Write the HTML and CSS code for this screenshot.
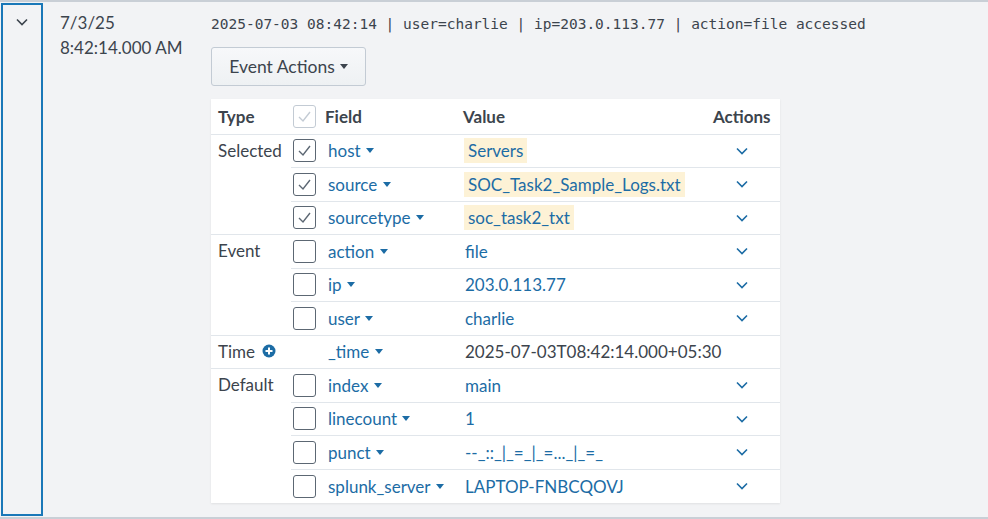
FILE: index.html
```html
<!DOCTYPE html>
<html>
<head>
<meta charset="utf-8">
<link rel="stylesheet" href="styles.css">
</head>
<body>
<div class="event">
  <div class="expand">
    <svg class="exp-chev" width="12" height="8" viewBox="0 0 12 8"><path d="M1 1.5 L6 6.5 L11 1.5" fill="none" stroke="#3c444d" stroke-width="1.6"/></svg>
  </div>
  <div class="time">
    <div>7/3/25</div>
    <div>8:42:14.000 AM</div>
  </div>
  <div class="body">
    <div class="raw">2025-07-03 08:42:14 | user=charlie | ip=203.0.113.77 | action=file accessed</div>
    <button class="btn"><span>Event Actions</span><span class="caret dark"></span></button>
    <table class="fields">
      <colgroup>
        <col class="w-type"><col class="w-chk"><col class="w-field"><col class="w-val"><col class="w-act">
      </colgroup>
      <thead>
        <tr>
          <th class="c-type">Type</th>
          <th class="c-chk"><span class="cb hdr"><svg viewBox="0 0 23 23"><path d="M6 12 L10 16 L17 7" fill="none" stroke="#c3cbd4" stroke-width="1.4"/></svg></span></th>
          <th class="c-field">Field</th>
          <th class="c-val">Value</th>
          <th class="c-act">Actions</th>
        </tr>
      </thead>
      <tbody>
        <tr class="grp">
          <td class="c-type" rowspan="3">Selected</td>
          <td class="c-chk"><span class="cb"><svg viewBox="0 0 23 23"><path d="M6 12 L10 16 L17 7" fill="none" stroke="#5c6773" stroke-width="1.4"/></svg></span></td>
          <td class="c-field">host <span class="caret"></span></td>
          <td class="c-val"><span class="hl">Servers</span></td>
          <td class="c-act"><svg class="chev" width="12" height="8" viewBox="0 0 12 8"><path d="M1 1.5 L6 6.5 L11 1.5" fill="none" stroke="#1c6ca5" stroke-width="1.6"/></svg></td>
        </tr>
        <tr class="sub">
          <td class="c-chk"><span class="cb"><svg viewBox="0 0 23 23"><path d="M6 12 L10 16 L17 7" fill="none" stroke="#5c6773" stroke-width="1.4"/></svg></span></td>
          <td class="c-field">source <span class="caret"></span></td>
          <td class="c-val"><span class="hl">SOC_Task2_Sample_Logs.txt</span></td>
          <td class="c-act"><svg class="chev" width="12" height="8" viewBox="0 0 12 8"><path d="M1 1.5 L6 6.5 L11 1.5" fill="none" stroke="#1c6ca5" stroke-width="1.6"/></svg></td>
        </tr>
        <tr class="sub">
          <td class="c-chk"><span class="cb"><svg viewBox="0 0 23 23"><path d="M6 12 L10 16 L17 7" fill="none" stroke="#5c6773" stroke-width="1.4"/></svg></span></td>
          <td class="c-field">sourcetype <span class="caret"></span></td>
          <td class="c-val"><span class="hl">soc_task2_txt</span></td>
          <td class="c-act"><svg class="chev" width="12" height="8" viewBox="0 0 12 8"><path d="M1 1.5 L6 6.5 L11 1.5" fill="none" stroke="#1c6ca5" stroke-width="1.6"/></svg></td>
        </tr>
        <tr class="grp">
          <td class="c-type" rowspan="3">Event</td>
          <td class="c-chk"><span class="cb"></span></td>
          <td class="c-field">action <span class="caret"></span></td>
          <td class="c-val"><span class="v">file</span></td>
          <td class="c-act"><svg class="chev" width="12" height="8" viewBox="0 0 12 8"><path d="M1 1.5 L6 6.5 L11 1.5" fill="none" stroke="#1c6ca5" stroke-width="1.6"/></svg></td>
        </tr>
        <tr class="sub">
          <td class="c-chk"><span class="cb"></span></td>
          <td class="c-field">ip <span class="caret"></span></td>
          <td class="c-val"><span class="v">203.0.113.77</span></td>
          <td class="c-act"><svg class="chev" width="12" height="8" viewBox="0 0 12 8"><path d="M1 1.5 L6 6.5 L11 1.5" fill="none" stroke="#1c6ca5" stroke-width="1.6"/></svg></td>
        </tr>
        <tr class="sub">
          <td class="c-chk"><span class="cb"></span></td>
          <td class="c-field">user <span class="caret"></span></td>
          <td class="c-val"><span class="v">charlie</span></td>
          <td class="c-act"><svg class="chev" width="12" height="8" viewBox="0 0 12 8"><path d="M1 1.5 L6 6.5 L11 1.5" fill="none" stroke="#1c6ca5" stroke-width="1.6"/></svg></td>
        </tr>
        <tr class="grp">
          <td class="c-type">Time <svg class="plus" width="14" height="14" viewBox="0 0 14 14"><circle cx="7" cy="7" r="6.5" fill="#1c6ca5"/><path d="M7 3.5 V10.5 M3.5 7 H10.5" stroke="#fff" stroke-width="2"/></svg></td>
          <td class="c-chk"></td>
          <td class="c-field">_time <span class="caret"></span></td>
          <td class="c-val"><span class="v plain">2025-07-03T08:42:14.000+05:30</span></td>
          <td class="c-act"></td>
        </tr>
        <tr class="grp">
          <td class="c-type" rowspan="4">Default</td>
          <td class="c-chk"><span class="cb"></span></td>
          <td class="c-field">index <span class="caret"></span></td>
          <td class="c-val"><span class="v">main</span></td>
          <td class="c-act"><svg class="chev" width="12" height="8" viewBox="0 0 12 8"><path d="M1 1.5 L6 6.5 L11 1.5" fill="none" stroke="#1c6ca5" stroke-width="1.6"/></svg></td>
        </tr>
        <tr class="sub">
          <td class="c-chk"><span class="cb"></span></td>
          <td class="c-field">linecount <span class="caret"></span></td>
          <td class="c-val"><span class="v">1</span></td>
          <td class="c-act"><svg class="chev" width="12" height="8" viewBox="0 0 12 8"><path d="M1 1.5 L6 6.5 L11 1.5" fill="none" stroke="#1c6ca5" stroke-width="1.6"/></svg></td>
        </tr>
        <tr class="sub">
          <td class="c-chk"><span class="cb"></span></td>
          <td class="c-field">punct <span class="caret"></span></td>
          <td class="c-val"><span class="v">--_::_|_=_|_=..._|_=_</span></td>
          <td class="c-act"><svg class="chev" width="12" height="8" viewBox="0 0 12 8"><path d="M1 1.5 L6 6.5 L11 1.5" fill="none" stroke="#1c6ca5" stroke-width="1.6"/></svg></td>
        </tr>
        <tr class="sub">
          <td class="c-chk"><span class="cb"></span></td>
          <td class="c-field">splunk_server <span class="caret"></span></td>
          <td class="c-val"><span class="v">LAPTOP-FNBCQOVJ</span></td>
          <td class="c-act"><svg class="chev" width="12" height="8" viewBox="0 0 12 8"><path d="M1 1.5 L6 6.5 L11 1.5" fill="none" stroke="#1c6ca5" stroke-width="1.6"/></svg></td>
        </tr>
      </tbody>
    </table>
  </div>
</div>
</body>
</html>
```
FILE: styles.css
```css
* { box-sizing: border-box; }
html, body { margin: 0; padding: 0; }
body {
  background: #f2f3f5;
  font-family: "Lato", "Liberation Sans", sans-serif;
  font-size: 17px;
  color: #3c444d;
  width: 988px;
  height: 519px;
  overflow: hidden;
}
.event {
  display: flex;
  height: 519px;
  border-top: 2px solid #c9cfd6;
  border-bottom: 2px solid #c9cfd6;
}
.expand {
  width: 42px;
  margin: 1px;
  border: 2px solid #1a78b8;
  display: flex;
  justify-content: center;
  padding-top: 13px;
}
.exp-chev { display: block; }
.time {
  width: 167px;
  padding-left: 16px;
  padding-top: 8px;
  line-height: 25px;
  font-size: 17px;
}
.body {
  padding-top: 12px;
}
.raw {
  font-family: "DejaVu Sans Mono", "Liberation Mono", monospace;
  font-size: 14.5px;
  line-height: 20px;
  height: 20px;
  white-space: nowrap;
}
.btn {
  margin-top: 13px;
  height: 39px;
  width: 155px;
  border: 1px solid #c3cbd4;
  border-radius: 3px;
  background: linear-gradient(#f7f8fa, #eef1f3);
  font-family: inherit;
  font-size: 17.5px;
  color: #3c444d;
  padding: 0;
  display: flex;
  align-items: center;
  justify-content: center;
  gap: 5px;
}
.caret {
  display: inline-block;
  width: 0; height: 0;
  border-left: 4.5px solid transparent;
  border-right: 4.5px solid transparent;
  border-top: 5px solid #1c6ca5;
  vertical-align: middle;
  margin-left: 1px;
  position: relative;
  top: -2px;
}
.caret.dark { border-top-color: #3c444d; top: 0; margin-left: 0; }
.fields {
  margin-top: 13px;
  background: #fff;
  border-collapse: collapse;
  table-layout: fixed;
  width: 569px;
  box-shadow: 0 1px 2px rgba(0,0,0,0.08);
}
.w-type { width: 80px; }
.w-chk { width: 34px; }
.w-field { width: 137px; }
.w-val { width: 238px; }
.w-act { width: 80px; }
.fields th {
  font-weight: 700;
  text-align: left;
  height: 35px;
  padding: 0;
  border-bottom: 1px solid #e1e6eb;
  white-space: nowrap;
}
.fields td {
  padding: 0;
  height: 33.5px;
  vertical-align: middle;
  white-space: nowrap;
}
.fields .c-type { padding-left: 7px; }
.fields td.c-type { vertical-align: top; padding-top: 5px; }
.fields .c-chk { padding-left: 2px; }
.fields td.c-field { padding-left: 3px; color: #1c6ca5; }
.fields th.c-field { padding-left: 0; }
.fields th.c-val { padding-left: 1px; }
.fields td.c-val { padding-left: 2px; }
.fields th.c-act { padding-left: 13px; }
.fields td.c-act { padding-left: 36px; }
tr.grp td { border-top: 1px solid #e1e6eb; }
tbody tr.grp:first-child td { border-top: none; }
tr.sub td { border-top: 1px solid #e1e6eb; }
.cb {
  display: block;
  width: 23px;
  height: 23px;
  border: 1px solid #5c6773;
  border-radius: 3px;
  position: relative;
}
.cb svg { position: absolute; left: -1px; top: -1px; width: 23px; height: 23px; }
.cb.hdr { border-color: #c3cbd4; }
.hl {
  display: inline-block;
  background: #fdf2d6;
  color: #1c6ca5;
  line-height: 19px;
  padding: 3px 4px;
}
.v { color: #1c6ca5; padding-left: 1px; }
.v.plain { color: #3c444d; }
.chev { display: block; }
.plus { vertical-align: middle; margin-left: 3px; position: relative; top: -2px; }
```
